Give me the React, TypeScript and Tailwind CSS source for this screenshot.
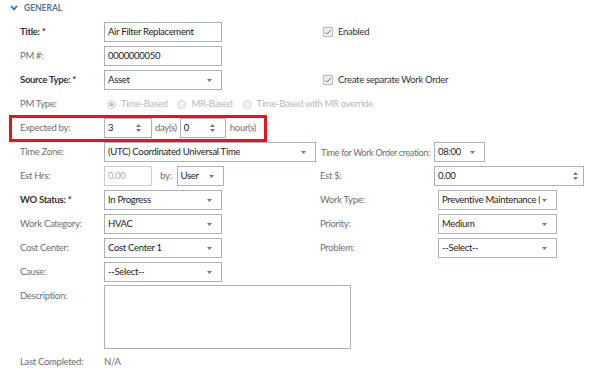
import React from 'react';

const LABEL = 'w-[84px] shrink-0 text-[#6f6f6f]';
const REQ = 'w-[84px] shrink-0 font-bold text-[#333]';
const BOX = 'h-[20px] flex items-center border border-[#a9b1c2] bg-white pl-[3px] text-[#222] relative';

function Caret() {
  return (
    <svg width="5" height="3" viewBox="0 0 5 3" className="absolute right-[9px] top-[8px]">
      <path d="M0 0 L5 0 L2.5 3 Z" fill="#777" />
    </svg>
  );
}

function Spinner({ right = 'right-[10px]' }: { right?: string }) {
  return (
    <svg width="5" height="8" viewBox="0 0 5 8" className={`absolute ${right} top-[5px]`}>
      <path d="M0 3 L2.5 0 L5 3 Z M0 5 L5 5 L2.5 8 Z" fill="#777" />
    </svg>
  );
}

function Select({ value, w }: { value: string; w: string }) {
  return (
    <div className={`${BOX} ${w}`}>
      <div className="overflow-hidden whitespace-nowrap mr-[16px]">{value}</div>
      <Caret />
    </div>
  );
}

function Text({ value, w }: { value: string; w: string }) {
  return <div className={`${BOX} ${w}`}>{value}</div>;
}

function Check({ label }: { label: string }) {
  return (
    <div className="flex items-center gap-[5px] pl-[3px] text-[#333]">
      <svg width="10" height="10" viewBox="0 0 10 10">
        <rect x="0.5" y="0.5" width="9" height="9" fill="#efefef" stroke="#b9b9b9" />
        <path d="M2.5 5.2 L4.2 7 L7.8 2.8" fill="none" stroke="#7a7a7a" strokeWidth="1" />
      </svg>
      <span>{label}</span>
    </div>
  );
}

function Radio({ label, on }: { label: string; on?: boolean }) {
  return (
    <div className="flex items-center gap-[5px] text-[#b8b8b8]">
      <svg width="9" height="9" viewBox="0 0 9 9">
        <circle cx="4.5" cy="4.5" r="4" fill="#f2f2f2" stroke="#d2d2d2" />
        {on && <circle cx="4.5" cy="4.5" r="1.8" fill="#b5b5b5" />}
      </svg>
      <span>{label}</span>
    </div>
  );
}

function Row({ children, className = '' }: { children: React.ReactNode; className?: string }) {
  return <div className={`flex items-center h-[24px] pl-[20px] ${className}`}>{children}</div>;
}

export default function App() {
  return (
    <div className="w-[590px] h-[374px] bg-white overflow-hidden font-['Lato',sans-serif] text-[9.5px] tracking-[-0.3px] leading-none">
      {/* Section header */}
      <div className="flex items-center h-[16px] pl-[10px] gap-[6px]">
        <svg width="8" height="6" viewBox="0 0 8 6">
          <path d="M1 1 L4 4.3 L7 1" fill="none" stroke="#2d72b8" strokeWidth="1.8" />
        </svg>
        <span className="font-bold text-[8.5px] tracking-normal text-[#5d7089]">GENERAL</span>
      </div>

      <div className="mt-[4px]">
        <Row>
          <div className="flex items-center w-[300px] shrink-0">
            <span className={REQ}>Title: *</span>
            <Text value="Air Filter Replacement" w="w-[118px]" />
          </div>
          <Check label="Enabled" />
        </Row>

        <Row>
          <span className={LABEL}>PM #:</span>
          <Text value="0000000050" w="w-[118px]" />
        </Row>

        <Row>
          <div className="flex items-center w-[300px] shrink-0">
            <span className={REQ}>Source Type: *</span>
            <Select value="Asset" w="w-[118px]" />
          </div>
          <Check label="Create separate Work Order" />
        </Row>

        <Row>
          <span className={LABEL}>PM Type:</span>
          <div className="flex items-center gap-[10px] pl-[3px]">
            <Radio label="Time-Based" on />
            <Radio label="MR-Based" />
            <Radio label="Time-Based with MR override" />
          </div>
        </Row>

        <Row className="relative">
          <span className={LABEL}>Expected by:</span>
          <div className={`${BOX} w-[48px] h-[19px]`}>
            3
            <Spinner />
          </div>
          <span className="px-[3px] text-[#6f6f6f]">day(s)</span>
          <div className={`${BOX} w-[46px] h-[19px]`}>
            0
            <Spinner />
          </div>
          <span className="pl-[4px] text-[#6f6f6f]">hour(s)</span>
          <div className="absolute left-[9px] top-[-1px] w-[258px] h-[27px] border-[3px] border-[#e8141c] pointer-events-none" />
        </Row>

        <Row>
          <span className={LABEL}>Time Zone:</span>
          <Select value="(UTC) Coordinated Universal Time" w="w-[212px]" />
          <span className="pl-[5px] w-[118px] shrink-0 text-[9px] tracking-[-0.35px] text-[#6f6f6f] whitespace-nowrap overflow-hidden">
            Time for Work Order creation:
          </span>
          <Select value="08:00" w="w-[51px]" />
        </Row>

        <Row>
          <div className="flex items-center w-[300px] shrink-0">
            <span className={LABEL}>Est Hrs:</span>
            <div className={`${BOX} w-[48px] border-[#c6ccd8] text-[#b0b0b0]`}>0.00</div>
            <span className="pl-[8px] pr-[5px] text-[#6f6f6f]">by:</span>
            <Select value="User" w="w-[47px]" />
          </div>
          <span className="w-[114px] shrink-0 text-[#6f6f6f]">Est $:</span>
          <div className={`${BOX} w-[150px]`}>
            0.00
            <Spinner right="right-[5px]" />
          </div>
        </Row>

        <Row>
          <div className="flex items-center w-[300px] shrink-0">
            <span className={REQ}>WO Status: *</span>
            <Select value="In Progress" w="w-[118px]" />
          </div>
          <span className="w-[118px] shrink-0 text-[#6f6f6f]">Work Type:</span>
          <Select value="Preventive Maintenance (PM)" w="w-[119px]" />
        </Row>

        <Row>
          <div className="flex items-center w-[300px] shrink-0">
            <span className={LABEL}>Work Category:</span>
            <Select value="HVAC" w="w-[118px]" />
          </div>
          <span className="w-[118px] shrink-0 text-[#6f6f6f]">Priority:</span>
          <Select value="Medium" w="w-[119px]" />
        </Row>

        <Row>
          <div className="flex items-center w-[300px] shrink-0">
            <span className={LABEL}>Cost Center:</span>
            <Select value="Cost Center 1" w="w-[118px]" />
          </div>
          <span className="w-[118px] shrink-0 text-[#6f6f6f]">Problem:</span>
          <Select value="--Select--" w="w-[119px]" />
        </Row>

        <Row>
          <span className={LABEL}>Cause:</span>
          <Select value="--Select--" w="w-[118px]" />
        </Row>

        <div className="flex pl-[20px] pt-[1px]">
          <span className={`${LABEL} pt-[6px]`}>Description:</span>
          <div className="w-[247px] h-[64px] border border-[#a9b1c2]" />
        </div>

        <Row className="mt-[1px]">
          <span className={LABEL}>Last Completed:</span>
          <span className="text-[#6f6f6f]">N/A</span>
        </Row>
      </div>
    </div>
  );
}
